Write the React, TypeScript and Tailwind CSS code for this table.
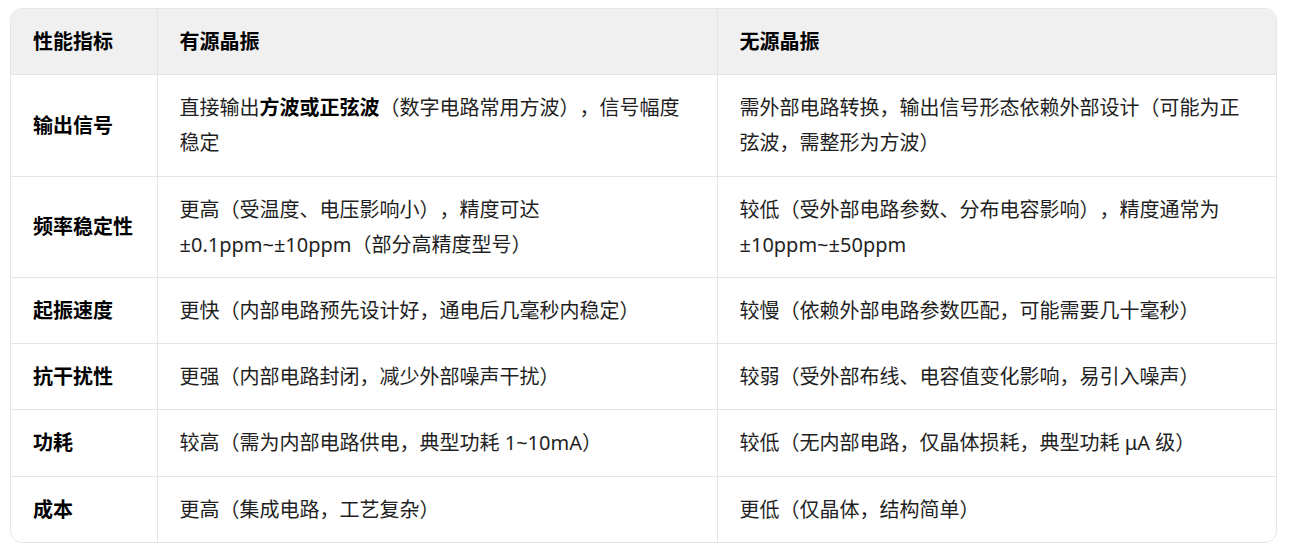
import React from "react";

const rows: { k: string; a: React.ReactNode; b: React.ReactNode }[] = [
  {
    k: "输出信号",
    a: (
      <>
        直接输出<strong className="font-bold text-black">方波或正弦波</strong>（数字电路常用方波），信号幅度稳定
      </>
    ),
    b: "需外部电路转换，输出信号形态依赖外部设计（可能为正弦波，需整形为方波）",
  },
  {
    k: "频率稳定性",
    a: "更高（受温度、电压影响小），精度可达 ±0.1ppm~±10ppm（部分高精度型号）",
    b: "较低（受外部电路参数、分布电容影响），精度通常为 ±10ppm~±50ppm",
  },
  {
    k: "起振速度",
    a: "更快（内部电路预先设计好，通电后几毫秒内稳定）",
    b: "较慢（依赖外部电路参数匹配，可能需要几十毫秒）",
  },
  {
    k: "抗干扰性",
    a: "更强（内部电路封闭，减少外部噪声干扰）",
    b: "较弱（受外部布线、电容值变化影响，易引入噪声）",
  },
  {
    k: "功耗",
    a: "较高（需为内部电路供电，典型功耗 1~10mA）",
    b: "较低（无内部电路，仅晶体损耗，典型功耗 μA 级）",
  },
  {
    k: "成本",
    a: "更高（集成电路，工艺复杂）",
    b: "更低（仅晶体，结构简单）",
  },
];

export default function App() {
  const font = {
    fontFamily: '"Noto Sans", "Noto Sans CJK SC", sans-serif',
  };
  return (
    <div className="w-[1310px] h-[547px] bg-white pt-[8px] pl-[10px]" style={font}>
      <div className="w-[1267px] border border-[#e5e5e5] rounded-[12px] overflow-hidden">
        <table className="w-full table-fixed border-collapse text-[20px] leading-[35.2px] text-[#1f1f1f] [text-spacing-trim:space-all]">
          <colgroup>
            <col className="w-[146px]" />
            <col className="w-[560px]" />
            <col />
          </colgroup>
          <thead>
            <tr className="bg-[#f0f0f0]">
              <th className="text-left font-bold text-black px-[22px] py-[15px] border-r border-b border-[#e5e5e5]">性能指标</th>
              <th className="text-left font-bold text-black px-[22px] py-[15px] border-r border-b border-[#e5e5e5]">有源晶振</th>
              <th className="text-left font-bold text-black px-[22px] py-[15px] border-b border-[#e5e5e5]">无源晶振</th>
            </tr>
          </thead>
          <tbody>
            {rows.map((r, i) => {
              const last = i === rows.length - 1;
              const bb = last ? "" : "border-b";
              return (
                <tr key={r.k}>
                  <td className={`align-middle font-bold text-black px-[22px] py-[15px] border-r border-[#e5e5e5] ${bb}`}>{r.k}</td>
                  <td className={`align-middle px-[22px] py-[15px] border-r border-[#e5e5e5] ${bb}`}>{r.a}</td>
                  <td className={`align-middle px-[22px] py-[15px] border-[#e5e5e5] ${bb}`}>{r.b}</td>
                </tr>
              );
            })}
          </tbody>
        </table>
      </div>
    </div>
  );
}
